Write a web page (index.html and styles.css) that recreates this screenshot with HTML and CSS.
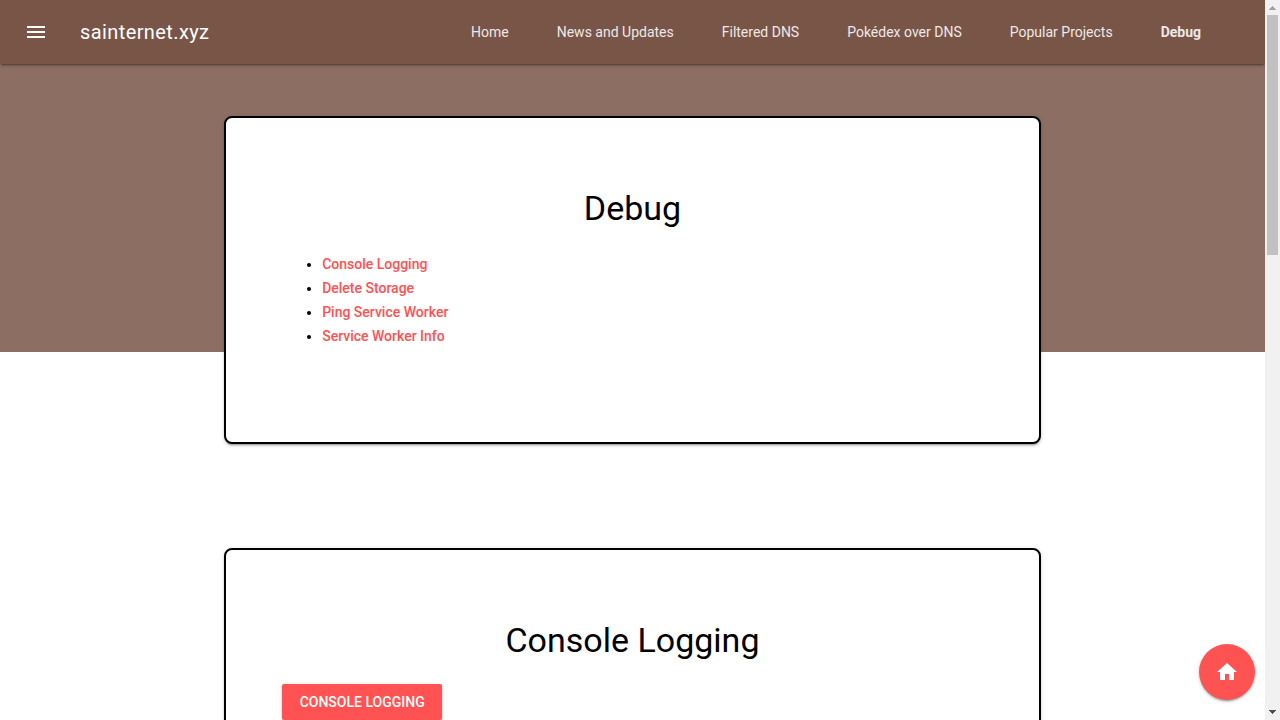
FILE: index.html
```html
<!DOCTYPE html>
<html lang="en">
<head>
<meta charset="utf-8">
<meta name="viewport" content="width=device-width, initial-scale=1">
<title>Debug - sainternet.xyz</title>
<link rel="stylesheet" href="styles.css">
</head>
<body>
<div class="window">
  <div class="layout">
    <header class="header">
      <button class="menu-button" type="button" aria-label="Open menu">
        <svg class="icon" viewBox="0 0 24 24" aria-hidden="true"><path d="M3 18h18v-2H3v2zm0-5h18v-2H3v2zm0-7v2h18V6H3z"/></svg>
      </button>
      <span class="title">sainternet.xyz</span>
      <nav class="nav">
        <a class="nav-link" href="#home">Home</a>
        <a class="nav-link" href="#news">News and Updates</a>
        <a class="nav-link" href="#filtered-dns">Filtered DNS</a>
        <a class="nav-link" href="#pokedex">Pokédex over DNS</a>
        <a class="nav-link" href="#projects">Popular Projects</a>
        <a class="nav-link nav-link-active" href="#debug">Debug</a>
      </nav>
    </header>
    <main class="content">
      <section class="card" id="debug">
        <h1 class="heading">Debug</h1>
        <ul class="list">
          <li><a class="link" href="#console-logging">Console Logging</a></li>
          <li><a class="link" href="#delete-storage">Delete Storage</a></li>
          <li><a class="link" href="#ping">Ping Service Worker</a></li>
          <li><a class="link" href="#info">Service Worker Info</a></li>
        </ul>
      </section>
      <section class="card" id="console-logging">
        <h2 class="heading">Console Logging</h2>
        <button class="button" type="button">Console Logging</button>
      </section>
    </main>
    <a class="fab" href="#home" aria-label="Home">
      <svg class="icon" viewBox="0 0 24 24" aria-hidden="true"><path d="M10 20v-6h4v6h5v-8h3L12 3 2 12h3v8z"/></svg>
    </a>
  </div>
  <div class="scrollbar" aria-hidden="true">
    <svg class="arrow arrow-up" viewBox="0 0 15 15"><path d="M7 6h1v1h1v1h1v1h1v1H4V9h1V8h1V7h1z"/></svg>
    <div class="track"><div class="thumb"></div></div>
    <svg class="arrow arrow-down" viewBox="0 0 15 15"><path d="M4 5h7v1h-1v1H9v1H8v1H7V8H6V7H5V6H4z"/></svg>
  </div>
</div>
</body>
</html>
```

FILE: styles.css
```css
* {
  box-sizing: border-box;
}

body {
  margin: 0;
  background: #fff;
  color: #000;
  font: 400 14px/24px Roboto, "Liberation Sans", sans-serif;
}

.window {
  display: flex;
  height: 100vh;
}

.layout {
  position: relative;
  display: flex;
  flex: 1;
  flex-direction: column;
  min-width: 0;
  overflow: hidden;
}

.header {
  z-index: 1;
  display: flex;
  flex: none;
  align-items: center;
  min-height: 64px;
  padding: 0 40px 0 12px;
  background: #795548;
  color: #fff;
  box-shadow: 0 2px 2px 0 rgba(0, 0, 0, .14), 0 3px 1px -2px rgba(0, 0, 0, .2), 0 1px 5px 0 rgba(0, 0, 0, .12);
}

.menu-button {
  display: flex;
  align-items: center;
  justify-content: center;
  width: 48px;
  height: 48px;
  margin-right: 20px;
  padding: 0;
  border: 0;
  background: none;
  color: inherit;
  cursor: pointer;
}

.icon {
  width: 24px;
  height: 24px;
  fill: currentColor;
}

.title {
  font-size: 20px;
  letter-spacing: .02em;
}

.nav {
  display: flex;
  margin-left: auto;
}

.nav-link {
  padding: 0 24px;
  color: #fff;
  line-height: 64px;
  text-decoration: none;
  white-space: nowrap;
  opacity: .87;
}

.nav-link-active {
  font-weight: 700;
}

.content {
  display: grid;
  flex: 1;
  grid-template-columns: repeat(12, minmax(0, 1fr));
  grid-auto-rows: max-content;
  gap: 104px 16px;
  min-height: 0;
  padding: 52px 16px;
  overflow: hidden;
  background: linear-gradient(#8d6e63, #8d6e63) top / 100% 40vh no-repeat;
}

.card {
  grid-column: 3 / span 8;
  padding: 70px 56px 94px;
  border: 2px solid #000;
  border-radius: 8px;
  background: #fff;
  box-shadow: 0 2px 2px 0 rgba(0, 0, 0, .14), 0 3px 1px -2px rgba(0, 0, 0, .2), 0 1px 5px 0 rgba(0, 0, 0, .12);
}

.heading {
  margin: 0 0 24px;
  font-size: 34px;
  font-weight: 400;
  line-height: 40px;
  text-align: center;
}

.list {
  margin: 0;
  padding-left: 40px;
}

.link {
  color: #ff5252;
  font-weight: 500;
  text-decoration: none;
}

.button {
  min-width: 160px;
  height: 36px;
  padding: 0 16px;
  border: 0;
  border-radius: 2px;
  background: #ff5252;
  color: #fff;
  font: 500 14px/36px Roboto, "Liberation Sans", sans-serif;
  text-transform: uppercase;
  box-shadow: 0 2px 2px 0 rgba(0, 0, 0, .14), 0 3px 1px -2px rgba(0, 0, 0, .2), 0 1px 5px 0 rgba(0, 0, 0, .12);
  cursor: pointer;
}

.fab {
  position: absolute;
  right: 10px;
  bottom: 20px;
  z-index: 2;
  display: flex;
  align-items: center;
  justify-content: center;
  width: 56px;
  height: 56px;
  border-radius: 50%;
  background: #ff5252;
  color: #fff;
  box-shadow: 0 2px 2px 0 rgba(0, 0, 0, .14), 0 3px 1px -2px rgba(0, 0, 0, .2), 0 1px 5px 0 rgba(0, 0, 0, .12);
}

.scrollbar {
  display: flex;
  flex: none;
  flex-direction: column;
  width: 15px;
  background: #f1f1f1;
}

.arrow {
  width: 15px;
  height: 15px;
  shape-rendering: crispEdges;
}

.arrow-up {
  fill: #a3a3a3;
}

.arrow-down {
  fill: #505050;
}

.track {
  flex: 1;
  padding: 0 2px;
}

.thumb {
  height: 240px;
  background: #c1c1c1;
}
```
